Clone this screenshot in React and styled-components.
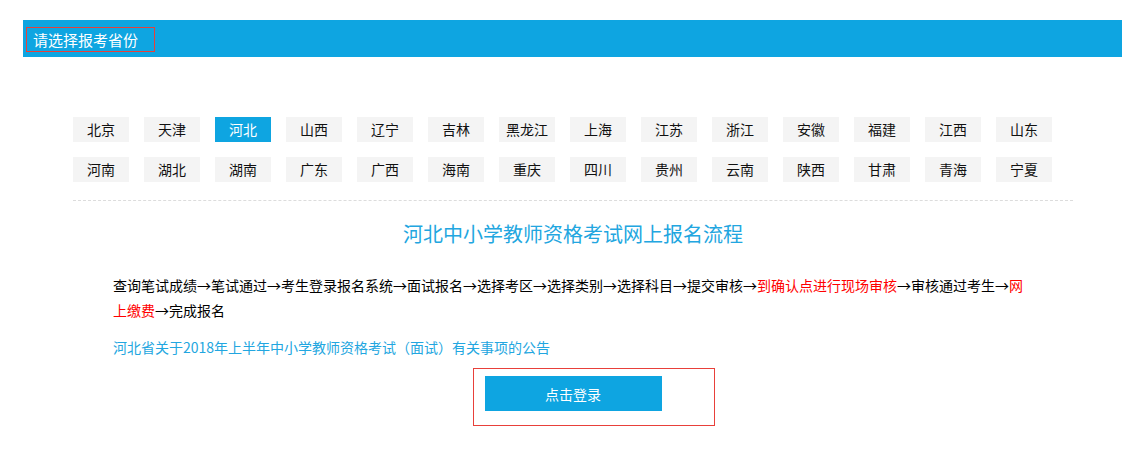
import React from "react";
import styled, { createGlobalStyle } from "styled-components";

const GlobalStyle = createGlobalStyle`
  html, body { margin: 0; padding: 0; background: #fff; }
  body { font-family: "Noto Sans CJK SC", "Noto Sans", sans-serif; }
`;

const BLUE = "#0ea5e1";
const RED = "#e8403a";

const Page = styled.div`
  padding: 20px 0 30px 23px;
`;

const HeaderBar = styled.div`
  height: 37px;
  background: ${BLUE};
  padding: 7px 0 0 3px;
  box-sizing: border-box;
`;

const HeaderLabel = styled.div`
  width: 129px;
  height: 25px;
  box-sizing: border-box;
  border: 1px solid ${RED};
  padding-left: 6px;
  color: #fff;
  font-size: 15px;
  line-height: 23px;
`;

const Content = styled.div`
  width: 1000px;
  margin-left: 50px;
  padding-top: 60px;
`;

const ProvinceList = styled.div`
  display: flex;
  flex-wrap: wrap;
  gap: 15px 15px;
`;

const ProvinceItem = styled.a`
  display: block;
  width: 56px;
  height: 25px;
  line-height: 25px;
  text-align: center;
  font-size: 14px;
  text-decoration: none;
  cursor: pointer;
  background: ${(p) => (p.$active ? BLUE : "#f4f4f4")};
  color: ${(p) => (p.$active ? "#fff" : "#111")};
`;

const Divider = styled.div`
  margin-top: 18px;
  border-top: 1px dashed #dcdcdc;
`;

const Section = styled.div`
  padding: 0 40px;
`;

const Title = styled.h2`
  margin: 18px 0 0;
  text-align: center;
  font-size: 20px;
  font-weight: normal;
  line-height: 30px;
  color: #22a6e0;
`;

const Flow = styled.p`
  margin: 24px 0 0;
  font-size: 14px;
  line-height: 25px;
  color: #000;
`;

const Hot = styled.span`
  color: #ff0000;
`;

const Notice = styled.a`
  display: block;
  margin-top: 12px;
  font-size: 14px;
  line-height: 24px;
  color: #22a6e0;
  text-decoration: none;
`;

const ButtonRow = styled.div`
  display: flex;
  justify-content: center;
  margin-top: 9px;
`;

const ButtonFrame = styled.div`
  margin-left: 41px;
  padding: 7px 52px 14px 11px;
  border: 1px solid ${RED};
`;

const LoginButton = styled.button`
  display: block;
  width: 177px;
  height: 35px;
  border: 0;
  padding: 0;
  background: ${BLUE};
  color: #fff;
  font-family: inherit;
  font-size: 14px;
  cursor: pointer;
`;

const provinces = [
  "北京", "天津", "河北", "山西", "辽宁", "吉林", "黑龙江", "上海", "江苏", "浙江",
  "安徽", "福建", "江西", "山东", "河南", "湖北", "湖南", "广东", "广西", "海南",
  "重庆", "四川", "贵州", "云南", "陕西", "甘肃", "青海", "宁夏",
];

export default function App() {
  return (
    <>
      <GlobalStyle />
      <Page>
        <HeaderBar>
          <HeaderLabel>请选择报考省份</HeaderLabel>
        </HeaderBar>
        <Content>
          <ProvinceList>
            {provinces.map((p) => (
              <ProvinceItem key={p} $active={p === "河北"}>
                {p}
              </ProvinceItem>
            ))}
          </ProvinceList>
          <Divider />
          <Section>
            <Title>河北中小学教师资格考试网上报名流程</Title>
            <Flow>
              查询笔试成绩→笔试通过→考生登录报名系统→面试报名→选择考区→选择类别→选择科目→提交审核→
              <Hot>到确认点进行现场审核</Hot>→审核通过考生→<Hot>网上缴费</Hot>→完成报名
            </Flow>
            <Notice>河北省关于2018年上半年中小学教师资格考试（面试）有关事项的公告</Notice>
            <ButtonRow>
              <ButtonFrame>
                <LoginButton>点击登录</LoginButton>
              </ButtonFrame>
            </ButtonRow>
          </Section>
        </Content>
      </Page>
    </>
  );
}
